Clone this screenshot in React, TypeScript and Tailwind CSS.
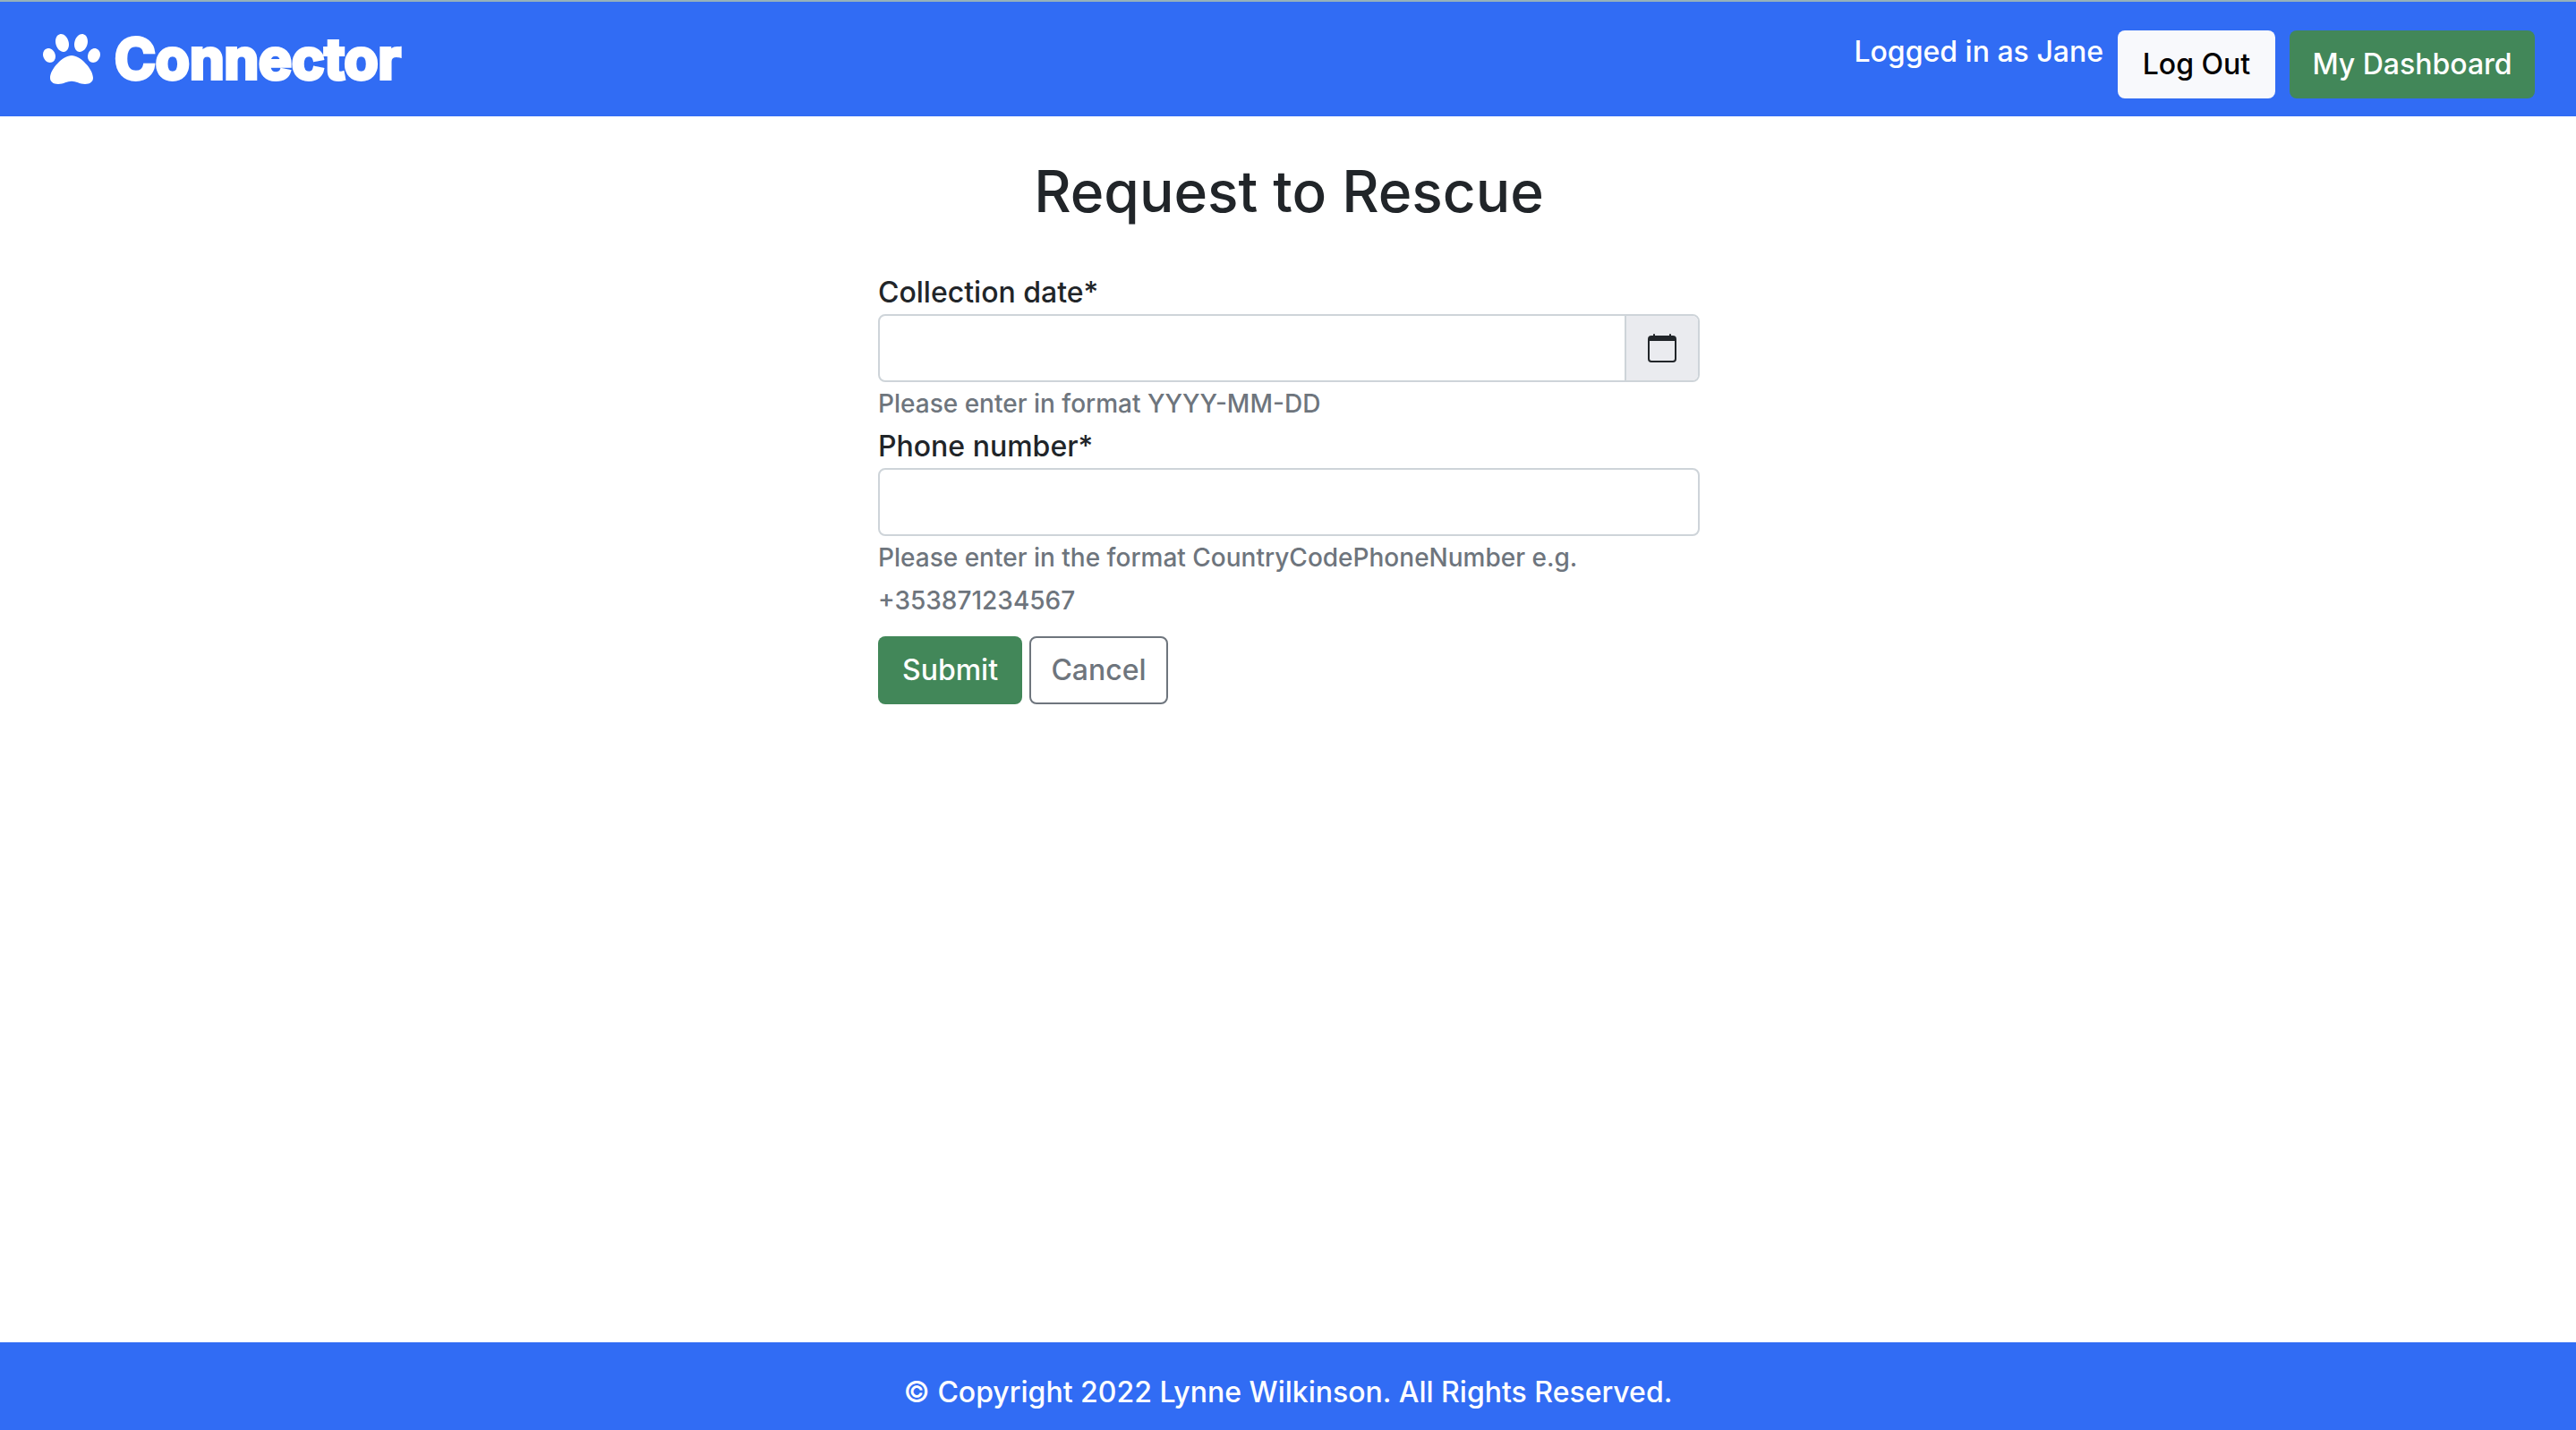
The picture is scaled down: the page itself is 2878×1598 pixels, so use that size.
import type { ReactNode } from 'react';
import { FaPaw } from 'react-icons/fa';
import { BsCalendar } from 'react-icons/bs';

function Field({ id, label, help, addon, type = 'text' }: {
  id: string;
  label: string;
  help: string;
  addon?: ReactNode;
  type?: string;
}) {
  return (
    <div>
      <label htmlFor={id} className="block text-[32px] leading-[48px] text-[#212529]">
        {label}
      </label>
      <div className="flex h-19 overflow-hidden rounded-lg border-2 border-[#ced4d9] bg-white">
        <input
          id={id}
          type={type}
          aria-describedby={`${id}-help`}
          className="min-w-0 flex-1 px-6 text-[32px] text-[#212529] outline-none"
        />
        {addon}
      </div>
      <p id={`${id}-help`} className="text-[28px] leading-[48px] text-[#6e757d]">
        {help}
      </p>
    </div>
  );
}

export default function App() {
  return (
    <div className="flex min-h-screen flex-col bg-white font-['Inter',sans-serif] text-[32px] leading-[48px] font-medium text-[#212529]">
      <header className="flex items-start justify-between border-t-2 border-[#97b1b9] bg-[#316cf4] pr-[46px] pb-5 pl-12 pt-8">
        <a href="#" className="flex items-center gap-4 text-white">
          <FaPaw className="size-16" aria-hidden="true" />
          <span className="text-[62px] leading-[64px] font-bold [-webkit-text-stroke:4px_white] [stroke-linejoin:round]">
            Connector
          </span>
        </a>
        <nav className="flex items-start gap-4">
          <span className="text-white">Logged in as Jane</span>
          <button type="button" className="h-19 w-44 rounded-lg bg-[#f8f9fc] text-black">
            Log Out
          </button>
          <a href="#" className="flex h-19 w-[274px] items-center justify-center rounded-lg bg-[#428759] text-white">
            My Dashboard
          </a>
        </nav>
      </header>

      <main className="flex-1 pr-6 pl-[26px] pt-[45px]">
        <h1 className="text-center text-[64px] leading-[77px]">Request to Rescue</h1>
        <form className="mx-auto mt-[51px] w-full max-w-[918px]">
          <Field
            id="collection-date"
            label="Collection date*"
            help="Please enter in format YYYY-MM-DD"
            addon={
              <button
                type="button"
                aria-label="Choose a date"
                className="flex w-[82px] items-center justify-center border-l-2 border-[#ced4d9] bg-[#eaebef]"
              >
                <BsCalendar className="size-8" />
              </button>
            }
          />
          <Field
            id="phone-number"
            label="Phone number*"
            type="tel"
            help="Please enter in the format CountryCodePhoneNumber e.g. +353871234567"
          />
          <div className="mt-4 flex gap-2">
            <button type="submit" className="h-19 w-[161px] rounded-lg bg-[#428759] text-white">
              Submit
            </button>
            <button type="button" className="h-19 w-[155px] rounded-lg border-2 border-[#6e757d] text-[#6e757d]">
              Cancel
            </button>
          </div>
        </form>
      </main>

      <footer className="bg-[#316cf4] pt-8 pb-[18px] text-center text-white">
        <p>© Copyright 2022 Lynne Wilkinson. All Rights Reserved.</p>
      </footer>
    </div>
  );
}
